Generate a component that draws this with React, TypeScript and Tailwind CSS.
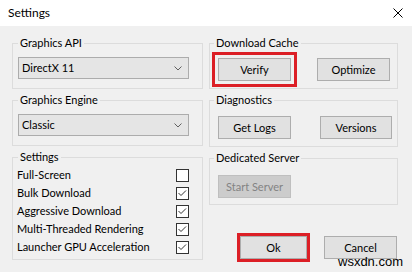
import React from "react"

const groups = "border border-[#dcdcdc] min-w-0"
const legendCls = "px-[2px] leading-[16px]"
const btn =
  "h-[23px] bg-[#e1e1e1] border border-[#adadad] flex items-center justify-center leading-none"

function Dropdown({ value }: { value: string }) {
  return (
    <div className="h-[22px] w-[171px] bg-[#e5e5e5] border border-[#acacac] flex items-center justify-between pl-[3px] pr-[5px]">
      <span>{value}</span>
      <svg width="8" height="5" viewBox="0 0 8 5" className="mr-[1px]">
        <polyline points="0.5,0.5 4,4 7.5,0.5" fill="none" stroke="#606060" strokeWidth="1" />
      </svg>
    </div>
  )
}

function Checkbox({ checked }: { checked: boolean }) {
  return (
    <div className="w-[13px] h-[13px] bg-white border border-[#333333] flex items-center justify-center">
      {checked && (
        <svg width="11" height="11" viewBox="0 0 11 11">
          <polyline points="1.5,5 4,7.5 9,2.5" fill="none" stroke="#333333" strokeWidth="1" />
        </svg>
      )}
    </div>
  )
}

const options = [
  { label: "Full-Screen", checked: false },
  { label: "Bulk Download", checked: true },
  { label: "Aggressive Download", checked: true },
  { label: "Multi-Threaded Rendering", checked: true },
  { label: "Launcher GPU Acceleration", checked: true },
]

export default function App() {
  return (
    <div className="relative w-[412px] h-[272px] bg-[#f0f0f0] text-[11px] text-black font-['Lato',sans-serif] overflow-hidden">
      {/* title bar */}
      <div className="h-[26px] bg-white flex items-center justify-between pl-[8px] pr-[9px]">
        <span className="text-[12px]">Settings</span>
        <svg width="10" height="10" viewBox="0 0 10 10">
          <path d="M0.5 0.5 L9.5 9.5 M9.5 0.5 L0.5 9.5" stroke="#000" strokeWidth="1" />
        </svg>
      </div>

      <div className="flex gap-[6px] pl-[12px] pt-[9px]">
        {/* left column */}
        <div className="w-[191px] flex flex-col gap-[3px]">
          <fieldset className={`${groups} pl-[5px] pr-[13px] pt-[6px] pb-[9px]`}>
            <legend className={legendCls}>Graphics API</legend>
            <Dropdown value="DirectX 11" />
          </fieldset>
          <fieldset className={`${groups} pl-[5px] pr-[13px] pt-[6px] pb-[9px]`}>
            <legend className={legendCls}>Graphics Engine</legend>
            <Dropdown value="Classic" />
          </fieldset>
          <fieldset className={`${groups} pl-[4px] pr-[13px] pt-[1px] pb-[3px]`}>
            <legend className={`${legendCls} ml-[1px]`}>Settings</legend>
            {options.map((o) => (
              <div key={o.label} className="h-[18px] flex items-center justify-between">
                <span>{o.label}</span>
                <Checkbox checked={o.checked} />
              </div>
            ))}
          </fieldset>
        </div>

        {/* right column */}
        <div className="w-[189px] flex flex-col gap-[3px]">
          <fieldset className={`${groups} pl-[4px] pt-[7px] pb-[7px]`}>
            <legend className={legendCls}>Download Cache</legend>
            <div className="flex gap-[26px] pl-[4px]">
              <div className={`${btn} w-[73px] outline-[3px] outline-solid outline-[#dc1f26] outline-offset-[3px]`}>Verify</div>
              <div className={`${btn} w-[73px]`}>Optimize</div>
            </div>
          </fieldset>
          <fieldset className={`${groups} pl-[4px] pt-[8px] pb-[7px]`}>
            <legend className={legendCls}>Diagnostics</legend>
            <div className="flex gap-[29px] pl-[4px]">
              <div className={`${btn} w-[73px] h-[22px]`}>Get Logs</div>
              <div className={`${btn} w-[72px] h-[22px]`}>Versions</div>
            </div>
          </fieldset>
          <fieldset className={`${groups} pl-[4px] pt-[9px] pb-[6px]`}>
            <legend className={legendCls}>Dedicated Server</legend>
            <div className="pl-[4px]">
              <div className="h-[23px] w-[73px] bg-[#cccccc] border border-[#bfbfbf] text-[#838383] flex items-center justify-center leading-none">
                Start Server
              </div>
            </div>
          </fieldset>
          <div className="flex justify-end gap-[17px] pr-[1px] mt-[28px]">
            <div className={`${btn} w-[67px] h-[21px] outline-[3px] outline-solid outline-[#dc1f26]`}>Ok</div>
            <div className={`${btn} w-[73px] h-[21px]`}>Cancel</div>
          </div>
        </div>
      </div>

      <span className="absolute left-[338px] top-[254px] text-[13px] leading-[16px] font-['Liberation_Sans',sans-serif]">
        wsxdn.com
      </span>
    </div>
  )
}
